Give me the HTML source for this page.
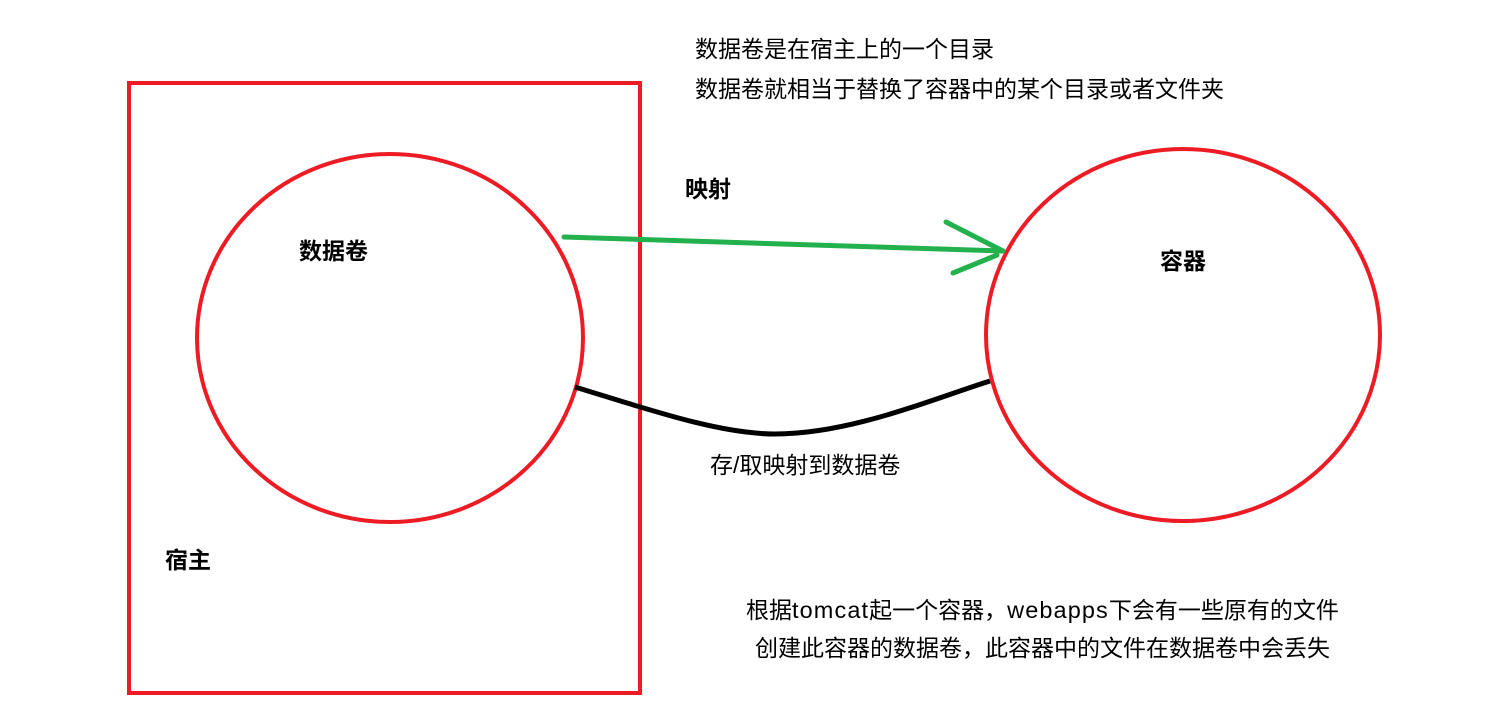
<!DOCTYPE html>
<html><head><meta charset="utf-8"><style>
body{margin:0;width:1490px;height:706px;background:#fff;position:relative;overflow:hidden;font-family:"Liberation Sans","Noto Sans CJK SC",sans-serif;color:#000}
.t{position:absolute;font-size:23px;line-height:26px;white-space:nowrap}
.b{font-weight:bold}
.l{letter-spacing:1.1px;font-size:23.5px}
</style></head><body>
<svg width="1490" height="706" style="position:absolute;left:0;top:0">
<rect x="129" y="83" width="511" height="610" fill="none" stroke="#ed1c24" stroke-width="4"/>
<ellipse cx="390" cy="338" rx="193" ry="184" fill="none" stroke="#ed1c24" stroke-width="4"/>
<ellipse cx="1183" cy="335" rx="197" ry="186" fill="none" stroke="#ed1c24" stroke-width="4"/>
<path d="M564 237 L1003 251 M946 222 L1003 251 M953 273 L997 255" fill="none" stroke="#22b14c" stroke-width="5" stroke-linecap="round"/>
<path d="M575 387 C650 410 720 434 775 434 C850 434 930 400 990 381" fill="none" stroke="#000" stroke-width="5"/>
</svg>
<div class="t" style="left:695px;top:36px">数据卷是在宿主上的一个目录</div>
<div class="t" style="left:695px;top:76px">数据卷就相当于替换了容器中的某个目录或者文件夹</div>
<div class="t b" style="left:685px;top:176px">映射</div>
<div class="t b" style="left:299px;top:238px">数据卷</div>
<div class="t b" style="left:1160px;top:248px">容器</div>
<div class="t" style="left:710px;top:452px">存/取映射到数据卷</div>
<div class="t b" style="left:165px;top:547px">宿主</div>
<div class="t" style="left:746px;top:597px">根据<span class="l">tomcat</span>起一个容器，<span class="l">webapps</span>下会有一些原有的文件</div>
<div class="t" style="left:755px;top:635px">创建此容器的数据卷，此容器中的文件在数据卷中会丢失</div>
</body></html>
